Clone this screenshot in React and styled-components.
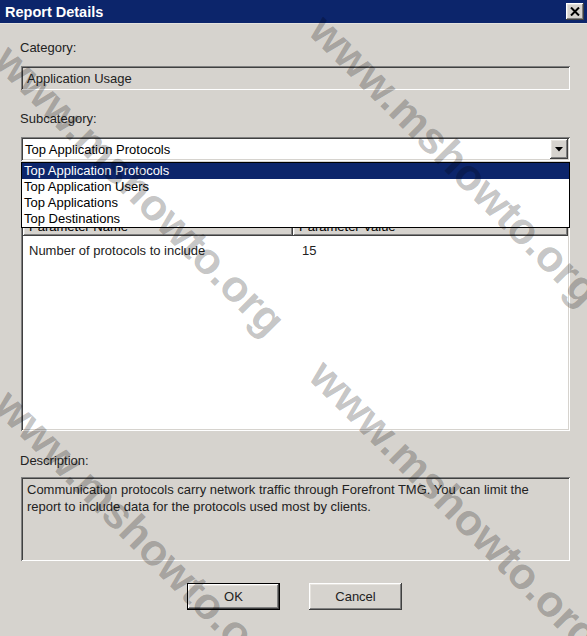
import React from 'react';
import styled, { createGlobalStyle } from 'styled-components';

const GlobalStyle = createGlobalStyle`
  html, body {
    margin: 0;
    padding: 0;
    background: #d6d3ce;
  }
  * {
    box-sizing: border-box;
  }
`;

const sunken = `
  box-shadow: inset 1px 1px #808080, inset -1px -1px #ffffff,
    inset 2px 2px #404040, inset -2px -2px #d6d3ce;
`;

const raised = `
  box-shadow: inset -1px -1px #404040, inset 1px 1px #ffffff,
    inset -2px -2px #808080, inset 2px 2px #e6e3de;
`;

const Window = styled.div`
  position: relative;
  width: 587px;
  height: 636px;
  overflow: hidden;
  background: #d6d3ce;
  font-family: "Liberation Sans", Arial, sans-serif;
  font-size: 13px;
  color: #000;
`;

const TitleBar = styled.div`
  height: 24px;
  display: flex;
  align-items: center;
  justify-content: space-between;
  padding: 0 3px 0 5px;
  background: #0c256b;
  border-bottom: 1px solid #e4e2de;
`;

const Title = styled.div`
  color: #fff;
  font-weight: bold;
  font-size: 14.5px;
`;

const CloseButton = styled.div`
  width: 18px;
  height: 17px;
  background: #d6d3ce;
  display: flex;
  align-items: center;
  justify-content: center;
  ${raised}
`;

const Body = styled.div`
  display: flex;
  flex-direction: column;
  padding: 0 17px 0 21px;
`;

const Label = styled.div`
  height: 16px;
  line-height: 16px;
  margin-left: -1px;
  margin-top: ${(p) => p.$top}px;
  color: #222;
`;

const ReadOnlyField = styled.div`
  height: 24px;
  margin-top: 10px;
  display: flex;
  align-items: center;
  padding: 0 6px;
  background: #d6d3ce;
  color: #222;
  ${sunken}
`;

const ComboWrap = styled.div`
  position: relative;
  margin-top: 10px;
  z-index: 2;
`;

const Combo = styled.div`
  height: 24px;
  display: flex;
  align-items: center;
  justify-content: space-between;
  padding: 2px 2px 2px 4px;
  background: #fff;
  ${sunken}
`;

const ArrowButton = styled.div`
  width: 18px;
  height: 20px;
  background: #d6d3ce;
  display: flex;
  align-items: center;
  justify-content: center;
  ${raised}
`;

const DropList = styled.div`
  position: absolute;
  left: 0;
  right: 0;
  top: 25px;
  background: #fff;
  border: 1px solid #000;
`;

const DropItem = styled.div`
  height: 16px;
  line-height: 16px;
  padding-left: 2px;
  background: ${(p) => (p.$active ? '#0c256b' : 'transparent')};
  color: ${(p) => (p.$active ? '#fff' : '#000')};
`;

const ListView = styled.div`
  margin-top: 53px;
  height: 217px;
  background: #fff;
  padding: 2px;
  ${sunken}
`;

const HeaderRow = styled.div`
  display: grid;
  grid-template-columns: 270px 1fr;
  height: 20px;
`;

const HeaderCell = styled.div`
  display: flex;
  align-items: center;
  padding-left: 6px;
  background: #d6d3ce;
  ${raised}
`;

const Row = styled.div`
  display: grid;
  grid-template-columns: 270px 1fr;
  margin-top: 7px;
  height: 16px;
  line-height: 16px;
  color: #222;
`;

const Cell = styled.div`
  padding-left: ${(p) => p.$pad}px;
`;

const DescBox = styled.div`
  margin-top: 8px;
  height: 84px;
  padding: 4px 6px;
  line-height: 17px;
  color: #222;
  background: #d6d3ce;
  ${sunken}
`;

const ButtonRow = styled.div`
  display: flex;
  justify-content: center;
  gap: 29px;
  margin-top: 22px;
  padding-right: 2px;
`;

const Button = styled.div`
  width: 93px;
  height: 27px;
  display: flex;
  align-items: center;
  justify-content: center;
  background: #d6d3ce;
  color: #222;
  ${raised}
  border: ${(p) => (p.$default ? '1px solid #000' : 'none')};
`;

const Watermark = styled.div`
  position: absolute;
  left: ${(p) => p.$x}px;
  top: ${(p) => p.$y}px;
  transform: translate(-50%, -50%) rotate(45deg);
  white-space: nowrap;
  font-family: "Liberation Sans", Arial, sans-serif;
  font-weight: bold;
  font-size: 44px;
  color: rgba(0, 0, 0, 0.24);
  pointer-events: none;
  z-index: 5;
`;

const options = [
  'Top Application Protocols',
  'Top Application Users',
  'Top Applications',
  'Top Destinations',
];

const marks = [
  { x: 455, y: 160 },
  { x: 140, y: 190 },
  { x: 455, y: 505 },
  { x: 140, y: 535 },
];

export default function App() {
  return (
    <Window>
      <GlobalStyle />
      <TitleBar>
        <Title>Report Details</Title>
        <CloseButton>
          <svg width="10" height="9" viewBox="0 0 10 9">
            <path d="M1 0.5 L9 8.5 M9 0.5 L1 8.5" stroke="#000" strokeWidth="2" />
          </svg>
        </CloseButton>
      </TitleBar>
      <Body>
        <Label $top={16}>Category:</Label>
        <ReadOnlyField>Application Usage</ReadOnlyField>
        <Label $top={21}>Subcategory:</Label>
        <ComboWrap>
          <Combo>
            <span>Top Application Protocols</span>
            <ArrowButton>
              <svg width="8" height="5" viewBox="0 0 8 5">
                <path d="M0 0 H8 L4 4.5 Z" fill="#000" />
              </svg>
            </ArrowButton>
          </Combo>
          <DropList>
            {options.map((o, i) => (
              <DropItem key={o} $active={i === 0}>
                {o}
              </DropItem>
            ))}
          </DropList>
        </ComboWrap>
        <ListView>
          <HeaderRow>
            <HeaderCell>Parameter Name</HeaderCell>
            <HeaderCell>Parameter Value</HeaderCell>
          </HeaderRow>
          <Row>
            <Cell $pad={6}>Number of protocols to include</Cell>
            <Cell $pad={9}>15</Cell>
          </Row>
        </ListView>
        <Label $top={22}>Description:</Label>
        <DescBox>
          Communication protocols carry network traffic through Forefront TMG. You can limit the
          report to include data for the protocols used most by clients.
        </DescBox>
        <ButtonRow>
          <Button $default>OK</Button>
          <Button>Cancel</Button>
        </ButtonRow>
      </Body>
      {marks.map((m, i) => (
        <Watermark key={i} $x={m.x} $y={m.y}>
          www.mshowto.org
        </Watermark>
      ))}
    </Window>
  );
}
